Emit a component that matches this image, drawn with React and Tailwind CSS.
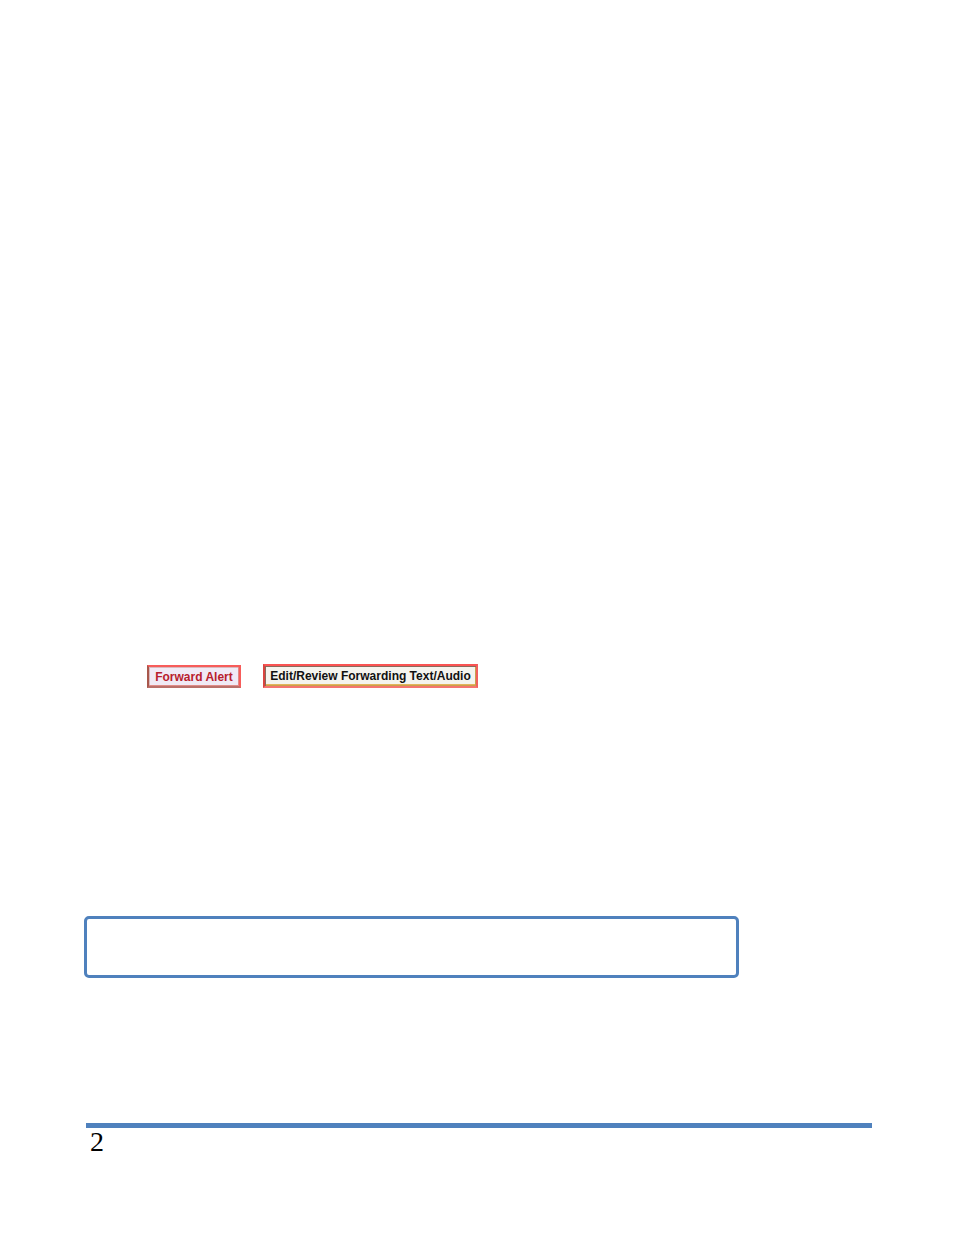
export default function App() {
  return (
    <div className="flex min-h-screen flex-col bg-white pr-[82px] pb-20 pl-[86px] text-black">
      <main className="flex flex-col pt-[664px]">
        <div className="flex flex-wrap items-end gap-[22px] pl-[61px] font-['Liberation_Sans',Arial,sans-serif] text-[12px] leading-4 font-bold whitespace-nowrap">
          <button
            type="button"
            className="h-[23px] w-[94px] border-2 border-t-[#f75c5a] border-r-[#f75c5a] border-b-[#b9706a] border-l-[#a8574b] bg-[#f0eaf5] text-[#b8202c] shadow-[inset_-1px_-1px_0_#e08c88,inset_1px_1px_0_#d9b9bd]"
          >
            Forward Alert
          </button>
          <button
            type="button"
            className="h-6 w-[215px] border-2 border-t-[#fa5352] border-r-[#f0605e] border-b-[#f57570] border-l-[#d9443f] bg-[#f5f4ee] text-[#111111] shadow-[inset_1px_1px_0_#8a6a5c,inset_-1px_-1px_0_#c9a24a,inset_0_-2px_0_#e3b45c]"
          >
            Edit/Review Forwarding Text/Audio
          </button>
        </div>
        <section
          aria-label="Note"
          className="mt-[228px] -ml-0.5 h-[62px] w-5/6 rounded-[5px] border-[3px] border-[#4f81bd]"
        />
      </main>
      <footer className="mt-auto border-t-[5px] border-[#4f81bd] pl-1 font-['Liberation_Serif','Times_New_Roman',serif] text-[28px] leading-[27px]">
        <p>2</p>
      </footer>
    </div>
  );
}
